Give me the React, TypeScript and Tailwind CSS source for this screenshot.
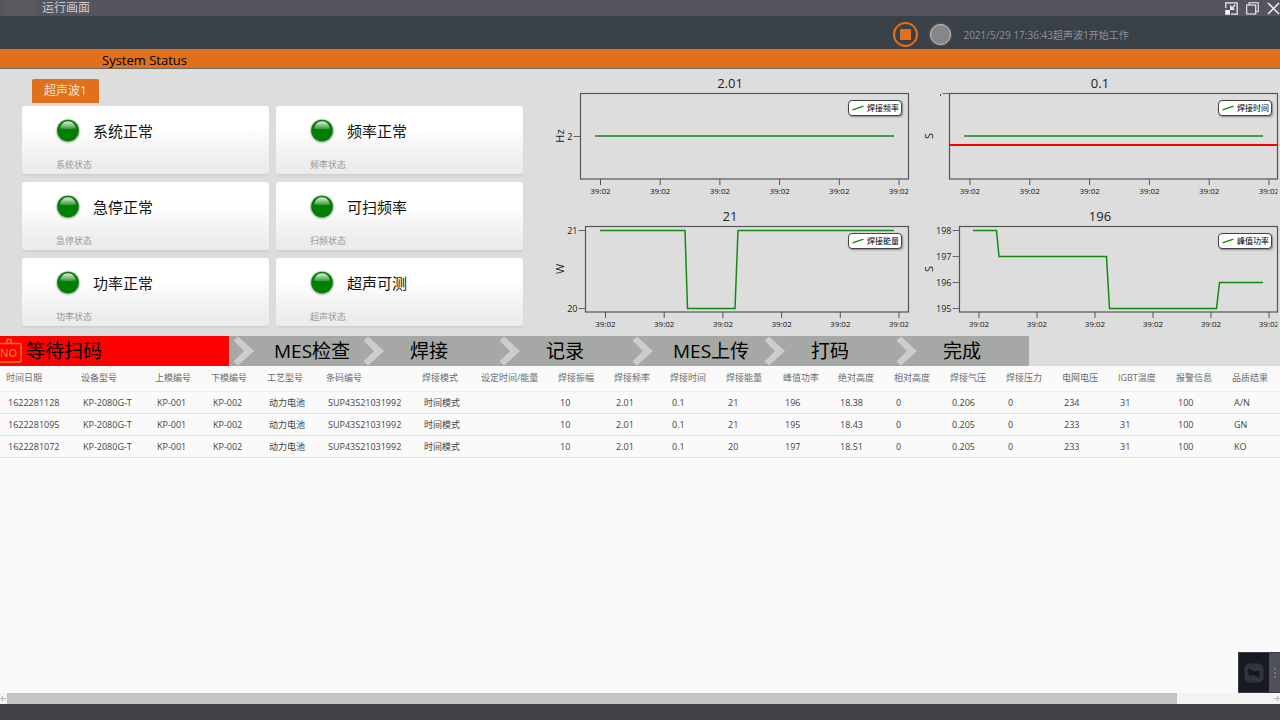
const statuses = [
  { title: '系统正常', label: '系统状态' },
  { title: '频率正常', label: '频率状态' },
  { title: '急停正常', label: '急停状态' },
  { title: '可扫频率', label: '扫频状态' },
  { title: '功率正常', label: '功率状态' },
  { title: '超声可测', label: '超声状态' },
];

type ChartData = {
  id: string;
  value: string;
  unit: string;
  legend: string;
  left: number;
  right: number;
  firstTick: number;
  yTicks: { label: string; y: number }[];
  points: string;
  limitY?: number;
};

const charts: ChartData[] = [
  {
    id: 'frequency',
    value: '2.01',
    unit: 'Hz',
    legend: '焊接频率',
    left: 40.5,
    right: 368.5,
    firstTick: 60.5,
    yTicks: [{ label: '2', y: 44.5 }],
    points: '55,44 354,44',
  },
  {
    id: 'time',
    value: '0.1',
    unit: 'S',
    legend: '焊接时间',
    left: 39.5,
    right: 367.5,
    firstTick: 60,
    yTicks: [{ label: '', y: 1.5 }],
    points: '54,44 353,44',
    limitY: 53,
  },
  {
    id: 'energy',
    value: '21',
    unit: 'W',
    legend: '焊接能量',
    left: 45.5,
    right: 368.5,
    firstTick: 65.5,
    yTicks: [
      { label: '21', y: 5.5 },
      { label: '20', y: 83.5 },
    ],
    points: '60,5.5 145,5.5 147.5,83.5 195,83.5 198,5.5 354,5.5',
  },
  {
    id: 'power',
    value: '196',
    unit: 'S',
    legend: '峰值功率',
    left: 49.5,
    right: 367.5,
    firstTick: 69,
    yTicks: [
      { label: '198', y: 5.5 },
      { label: '197', y: 31.5 },
      { label: '196', y: 57.5 },
      { label: '195', y: 83.5 },
    ],
    points: '63,5.5 86.5,5.5 89,31.5 196.5,31.5 199.5,83.5 306.5,83.5 309.5,57.5 353,57.5',
  },
];

const steps = [
  { name: 'MES检查', pad: 'pl-5' },
  { name: '焊接', pad: 'pl-[26px]' },
  { name: '记录', pad: 'pl-[26px]' },
  { name: 'MES上传', pad: 'pl-5' },
  { name: '打码', pad: 'pl-[26px]' },
  { name: '完成', pad: 'pl-[26px]' },
];

const columns = [
  { name: '时间日期', width: 'w-[75px]' },
  { name: '设备型号', width: 'w-[74px]' },
  { name: '上模编号', width: 'w-[56px]' },
  { name: '下模编号', width: 'w-[56px]' },
  { name: '工艺型号', width: 'w-[59px]' },
  { name: '条码编号', width: 'w-[96px]' },
  { name: '焊接模式', width: 'w-[59px]' },
  { name: '设定时间/能量', width: 'w-[77px]' },
  { name: '焊接振幅', width: 'w-[56px]' },
  { name: '焊接频率', width: 'w-[56px]' },
  { name: '焊接时间', width: 'w-[56px]' },
  { name: '焊接能量', width: 'w-[57px]' },
  { name: '峰值功率', width: 'w-[55px]' },
  { name: '绝对高度', width: 'w-[56px]' },
  { name: '相对高度', width: 'w-[56px]' },
  { name: '焊接气压', width: 'w-[56px]' },
  { name: '焊接压力', width: 'w-[56px]' },
  { name: '电网电压', width: 'w-[56px]' },
  { name: 'IGBT温度', width: 'w-[58px]' },
  { name: '报警信息', width: 'w-[56px]' },
  { name: '品质结果', width: 'w-[54px]' },
];

const rows = [
  ['1622281128', 'KP-2080G-T', 'KP-001', 'KP-002', '动力电池', 'SUP43S21031992', '时间模式', '', '10', '2.01', '0.1', '21', '196', '18.38', '0', '0.206', '0', '234', '31', '100', 'A/N'],
  ['1622281095', 'KP-2080G-T', 'KP-001', 'KP-002', '动力电池', 'SUP43S21031992', '时间模式', '', '10', '2.01', '0.1', '21', '195', '18.43', '0', '0.205', '0', '233', '31', '100', 'GN'],
  ['1622281072', 'KP-2080G-T', 'KP-001', 'KP-002', '动力电池', 'SUP43S21031992', '时间模式', '', '10', '2.01', '0.1', '20', '197', '18.51', '0', '0.205', '0', '233', '31', '100', 'KO'],
];

function TitleBar() {
  return (
    <header className="flex h-4 items-center justify-between bg-[#56545e]">
      <div className="flex items-center">
        <span className="ml-1 h-4 w-8 rounded-sm bg-[#5a5960]" />
        <h1 className="ml-1.5 text-xs leading-4 text-[#cfced3]">运行画面</h1>
      </div>
      <div className="flex items-center gap-2 text-[#f2f2f2]">
        <button type="button" aria-label="还原" className="block">
          <svg width="13" height="13" viewBox="0 0 13 13" fill="none" stroke="currentColor" strokeWidth="1.2">
            <path d="M0.8 6V0.8H12.2V12.2H6" />
            <path d="M10.3 2.7L5.8 7.2M5.8 3.6V7.2H9.4" strokeWidth="1.4" />
            <rect x="0.2" y="8" width="4.8" height="4.8" fill="currentColor" stroke="none" />
          </svg>
        </button>
        <button type="button" aria-label="最大化" className="block">
          <svg width="13" height="13" viewBox="0 0 13 13" fill="none" stroke="currentColor" strokeWidth="1.1">
            <rect x="0.7" y="3" width="9" height="9" />
            <path d="M3 3V0.8H12.2V9.8H9.8" />
          </svg>
        </button>
        <button type="button" aria-label="关闭" className="block">
          <svg width="13" height="13" viewBox="0 0 13 13" fill="none" stroke="currentColor" strokeWidth="1.5">
            <path d="M1 1L12 12M12 1L1 12" />
          </svg>
        </button>
      </div>
    </header>
  );
}

function Toolbar() {
  return (
    <div className="flex h-[33px] items-center bg-[#3a4048] pt-1 pl-[69.8%]">
      <button type="button" aria-label="停止" className="flex size-[25px] items-center justify-center rounded-full border-2 border-[#e0701b]">
        <span className="size-[11px] bg-[#e0701b]" />
      </button>
      <span className="ml-3 size-[21px] rounded-full border border-[#c4c4c4] bg-[#868686] shadow-[0_0_3px_#777]" />
      <span className="ml-3 text-[10px] leading-4 whitespace-nowrap text-[#8d9197]">2021/5/29 17:36:43超声波1开始工作</span>
    </div>
  );
}

function StatusCard({ title, label }: { title: string; label: string }) {
  return (
    <div className="h-[69px] rounded-[3px] border-b border-[#cfcfcf] bg-linear-to-b from-white from-30% to-[#ececec] to-90% pt-3 pl-[33px] shadow-xs">
      <div className="flex items-center">
        <svg width="26" height="26" viewBox="0 0 26 26" aria-hidden="true">
          <defs>
            <linearGradient id={`gloss-${title}`} x1="0" y1="0" x2="0" y2="1">
              <stop offset="0" stopColor="#e2f2e2" />
              <stop offset="0.5" stopColor="#8cc48c" />
              <stop offset="1" stopColor="#2f942f" />
            </linearGradient>
            <radialGradient id={`shade-${title}`}>
              <stop offset="0.8" stopColor="#000" stopOpacity="0.3" />
              <stop offset="1" stopColor="#000" stopOpacity="0" />
            </radialGradient>
          </defs>
          <circle cx="13" cy="13" r="13" fill={`url(#shade-${title})`} />
          <circle cx="13" cy="12.5" r="10.8" fill="#008000" />
          <path d="M5 10.5C6 6 9 3.2 13 3.2S20 6 21 10.5C17.500 11.6 8.500 11.6 5 10.5Z" fill={`url(#gloss-${title})`} />
        </svg>
        <h2 className="ml-3 text-[15px] leading-6 text-[#111]">{title}</h2>
      </div>
      <p className="mt-[15px] pl-px text-[9px] leading-3 text-[#999]">{label}</p>
    </div>
  );
}

function Chart({ chart }: { chart: ChartData }) {
  const { left, right, firstTick } = chart;
  const step = (359 - firstTick) / 5;
  const ticks = [0, 1, 2, 3, 4, 5].map((i) => firstTick + i * step);

  return (
    <figure className="relative">
      <figcaption className="pl-[10px] text-center text-[13px] leading-[18px] text-[#222]">{chart.value}</figcaption>
      <div className="relative">
        <svg viewBox="0 0 370 111" className="block w-full" role="img" aria-label={chart.legend}>
          <defs>
            <clipPath id={`axis-${chart.id}`}>
              <rect x="0" y="80" width={right} height="31" />
            </clipPath>
          </defs>
          <rect x={left} y="1.5" width={right - left} height="85.5" fill="none" stroke="#555" strokeWidth="1.2" />
          {chart.yTicks.map((tick) => (
            <g key={tick.y}>
              <path d={`M${left - 7} ${tick.y}H${left}`} stroke="#666" />
              <text x={left - 8} y={tick.y + 3} textAnchor="end" fontSize="9" fill="#222">{tick.label}</text>
            </g>
          ))}
          <g clipPath={`url(#axis-${chart.id})`}>
            {ticks.map((x) => (
              <g key={x}>
                <path d={`M${x} 87V93`} stroke="#555" />
                <text x={x} y="102" textAnchor="middle" fontSize="8" fill="#111">39:02</text>
              </g>
            ))}
          </g>
          {chart.limitY && <path d={`M${left} ${chart.limitY}H${right}`} stroke="#f00" strokeWidth="1.8" />}
          {chart.id === 'time' && <path d="M30.5 2V4" stroke="#555" />}
          <polyline points={chart.points} fill="none" stroke="#128a12" strokeWidth="1.5" />
          <text x={right - 345} y="44" textAnchor="middle" fontSize="11" fill="#222" transform={`rotate(-90 ${right - 345} 44)`}>
            {chart.unit}
          </text>
        </svg>
        <div className="absolute top-2 right-2 flex h-4 w-[54px] items-center justify-between rounded-[4px] border border-[#444] bg-white pr-[2px] pl-[3px] shadow-[1px_1px_2px_#888]">
          <svg width="12" height="6" viewBox="0 0 12 6" aria-hidden="true">
            <path d="M0.5 4.8L11.5 1.2" stroke="#128a12" strokeWidth="1.4" />
          </svg>
          <span className="text-[8px] leading-3 whitespace-nowrap text-black">{chart.legend}</span>
        </div>
      </div>
    </figure>
  );
}

function ProcessSteps() {
  return (
    <ol className="grid h-[30px] grid-cols-[229fr_130fr_136fr_133fr_132fr_132fr_137fr_251fr] bg-[#dddddd] text-[19px] leading-[30px] text-black">
      <li className="flex items-center bg-[#ff0000]">
        <svg width="22" height="26" viewBox="0 0 22 26" fill="none" stroke="#e8781e" strokeWidth="1.5" aria-hidden="true">
          <path d="M7 5.500V1.500H11V5.500" />
          <path d="M0 5.500H19.500Q21 5.500 21 7V22.500Q21 24 19.500 24H0" />
          <text x="0" y="19" fontSize="11" fontWeight="600" fill="#e8781e" stroke="none">NO</text>
        </svg>
        <span className="ml-1">等待扫码</span>
      </li>
      {steps.map((step) => (
        <li key={step.name} className="flex items-center bg-[#a5a8a5] pl-1">
          <svg width="21" height="30" viewBox="0 0 21 30" className="shrink-0" aria-hidden="true">
            <path d="M0.5 4.5L5 0.5L21 15L5 29.5L0.5 25.5L11 15Z" fill="#cdcdcd" />
          </svg>
          <span className={`${step.pad} whitespace-nowrap`}>{step.name}</span>
        </li>
      ))}
    </ol>
  );
}

function RecordTable() {
  return (
    <table className="w-full table-fixed border-collapse text-left text-[9px] leading-3 whitespace-nowrap">
      <thead>
        <tr className="h-[25px] border-b border-[#ececec] text-[#6c6c6c]">
          {columns.map((col) => (
            <th key={col.name} scope="col" className={`${col.width} pl-1.5 font-normal`}>
              {col.name}
            </th>
          ))}
        </tr>
      </thead>
      <tbody>
        {rows.map((row) => (
          <tr key={row[0]} className="h-[22px] border-b border-[#e0e0e0] text-[#444]">
            {row.map((cell, i) => (
              <td key={i} className="pt-px pl-2">
                {cell}
              </td>
            ))}
          </tr>
        ))}
      </tbody>
    </table>
  );
}

export default function App() {
  return (
    <div className="flex min-h-screen flex-col bg-[#fafafa] font-['Open_Sans','Noto_Sans_CJK_SC',sans-serif]">
      <TitleBar />
      <Toolbar />
      <div className="h-5 border-b border-[#6b6b62] bg-[#e0701b] pl-[102px] text-[13px] leading-[22px] text-black">System Status</div>

      <main className="flex flex-1 flex-col">
        <section className="grid grid-cols-[27fr_37fr] bg-[#dddddd]">
          <div className="pt-[10px] pr-[17px] pb-[9px] pl-[22px]">
            <button type="button" className="ml-[10px] block h-6 w-[67px] rounded-t-[2px] bg-[#e0701b] text-xs leading-6 text-[#f7e3d3]">
              超声波1
            </button>
            <div className="mt-[3px] grid grid-cols-2 gap-[7px]">
              {statuses.map((s) => (
                <StatusCard key={s.label} title={s.title} label={s.label} />
              ))}
            </div>
          </div>
          <div className="grid grid-cols-2 content-start gap-y-1 pt-[5px]">
            {charts.map((chart) => (
              <Chart key={chart.id} chart={chart} />
            ))}
          </div>
        </section>

        <ProcessSteps />

        <section className="relative flex-1">
          <RecordTable />
          <div className="absolute right-0 bottom-0 flex h-[41px] w-[42px] border border-r-0 border-[#3a3c46] bg-[#181a23]">
            <button type="button" aria-label="工具" className="flex flex-1 items-center justify-center">
              <svg width="20" height="20" viewBox="0 0 20 20" aria-hidden="true">
                <rect x="0.5" y="0.5" width="19" height="19" rx="5" fill="#32343b" />
                <path d="M4.5 5L10 8.5L15.5 7.5V15.5L10.5 12L4.5 12.5Z" fill="#15171e" />
              </svg>
            </button>
            <span className="flex w-[11px] flex-col items-center justify-center gap-[2px] bg-[#4e4f5c]">
              <i className="size-[2px] bg-[#a0624e]" />
              <i className="size-[2px] bg-[#a0624e]" />
              <i className="size-[2px] bg-[#a0624e]" />
            </span>
          </div>
        </section>

        <div className="flex h-[11px] items-center bg-[#f3f3f3] text-[#b0b0b0]">
          <svg width="7" height="7" viewBox="0 0 7 7" fill="none" stroke="currentColor" aria-hidden="true">
            <path d="M6 3.5H1M3 1L1 3.5L3 6" />
          </svg>
          <div className="h-full w-[91.4%] bg-[#c4c4c4]" />
          <svg width="7" height="7" viewBox="0 0 7 7" className="ml-auto" fill="none" stroke="currentColor" aria-hidden="true">
            <path d="M1 3.5H6M4 1L6 3.5L4 6" />
          </svg>
        </div>
      </main>
      <footer className="h-4 bg-[#424147]" />
    </div>
  );
}
